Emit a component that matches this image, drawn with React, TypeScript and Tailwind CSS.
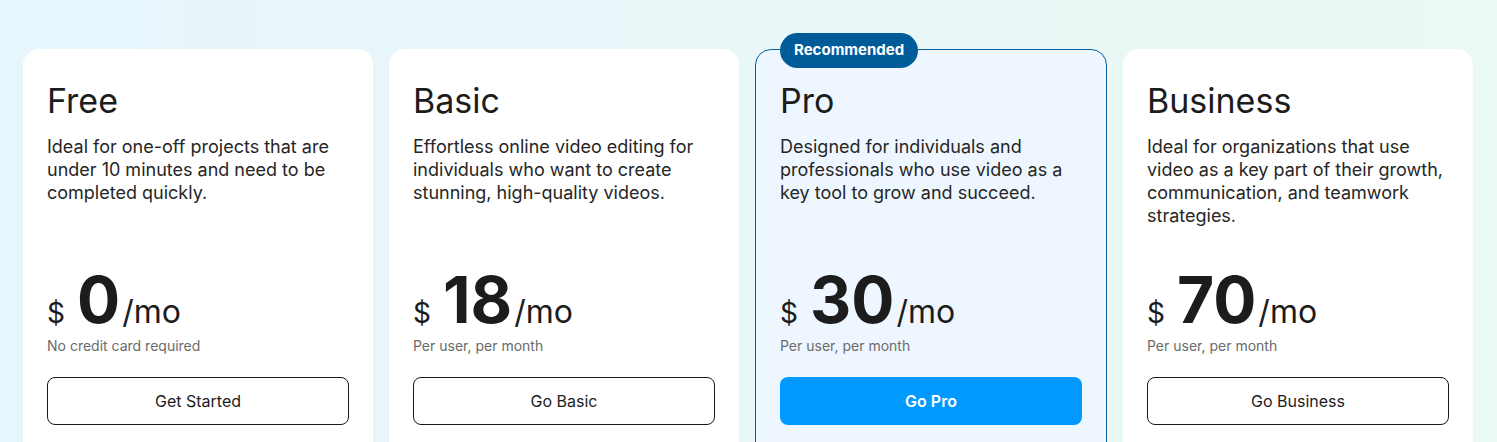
const plans = [
  {
    name: "Free",
    description:
      "Ideal for one-off projects that are under 10 minutes and need to be completed quickly.",
    price: "0",
    note: "No credit card required",
    cta: "Get Started",
    featured: false,
  },
  {
    name: "Basic",
    description:
      "Effortless online video editing for individuals who want to create stunning, high-quality videos.",
    price: "18",
    note: "Per user, per month",
    cta: "Go Basic",
    featured: false,
  },
  {
    name: "Pro",
    description:
      "Designed for individuals and professionals who use video as a key tool to grow and succeed.",
    price: "30",
    note: "Per user, per month",
    cta: "Go Pro",
    featured: true,
  },
  {
    name: "Business",
    description:
      "Ideal for organizations that use video as a key part of their growth, communication, and teamwork strategies.",
    price: "70",
    note: "Per user, per month",
    cta: "Go Business",
    featured: false,
  },
];

const App = () => {
  return (
    <div className="h-[442px] w-full overflow-hidden bg-gradient-to-r from-[#e7f5fd] to-[#eaf9f2] font-['Inter',sans-serif]">
      <div className="flex gap-4 pl-[23px] pr-6 pt-[49px]">
        {plans.map((plan) => (
          <div
            key={plan.name}
            className={
              plan.featured
                ? "relative flex h-[420px] flex-1 flex-col rounded-2xl border border-[#0a5e9b] bg-[#eef7ff] px-6 pt-[30px]"
                : "relative flex h-[420px] flex-1 flex-col rounded-2xl bg-white px-6 pt-[31px]"
            }
          >
            {plan.featured && (
              <div className="absolute left-6 top-[-17px] flex h-[35px] items-center rounded-full bg-[#005c99] px-[14px] text-[15px] font-bold text-white">
                Recommended
              </div>
            )}
            <h2 className="text-[34px] leading-[42px] font-normal text-[#1c1c1c]">
              {plan.name}
            </h2>
            <p className="mt-[13px] h-[133px] text-[18px] leading-[23px] text-[#262626]">
              {plan.description}
            </p>
            <div className="flex items-baseline text-[#1c1c1c]">
              <span className="mr-[12px] text-[28px] leading-none">$</span>
              <span className="text-[64px] leading-[64px] font-bold">
                {plan.price}
              </span>
              <span className="ml-[2px] text-[32px] leading-none">/mo</span>
            </div>
            <p className="mt-[5px] text-[14px] leading-[18px] text-[#6b6b6b]">
              {plan.note}
            </p>
            <button
              className={
                plan.featured
                  ? "mt-[22px] h-12 w-full rounded-lg bg-[#0099ff] text-[16px] font-semibold text-white"
                  : "mt-[22px] h-12 w-full rounded-lg border border-[#1a1a1a] bg-white text-[16px] text-[#1c1c1c]"
              }
            >
              {plan.cta}
            </button>
          </div>
        ))}
      </div>
    </div>
  );
};

export default App;
